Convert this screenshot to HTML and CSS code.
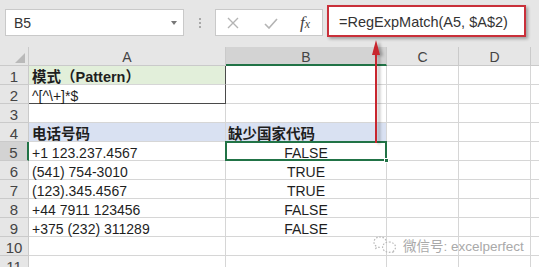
FILE: index.html
```html
<!DOCTYPE html>
<html lang="zh">
<head>
<meta charset="utf-8">
<link rel="stylesheet" href="styles.css">
</head>
<body>
<div class="app">
  <div class="toolbar">
    <div class="namebox"><span>B5</span><span class="caret"></span></div>
    <div class="dots"><i></i><i></i><i></i></div>
    <div class="fxbox">
      <svg class="ic-x" width="12" height="12" viewBox="0 0 12 12"><path d="M1 1L11 11M11 1L1 11" stroke="#b4b4b4" stroke-width="1.4" fill="none"/></svg>
      <svg class="ic-ok" width="14" height="11" viewBox="0 0 14 11"><path d="M1 6L5 10L13 1" stroke="#b4b4b4" stroke-width="1.6" fill="none"/></svg>
      <span class="fx">f<small>x</small></span>
    </div>
    <div class="formula">=RegExpMatch(A5, $A$2)</div>
  </div>

  <div class="sheet">
    <div class="h corner"><span class="tri"></span></div>
    <div class="h col">A</div>
    <div class="h col sel">B</div>
    <div class="h col">C</div>
    <div class="h col">D</div>
    <div class="h col last"></div>

    <div class="h row">1</div>
    <div class="c green boxr bold">模式（Pattern）</div>
    <div class="c"></div><div class="c"></div><div class="c"></div><div class="c last"></div>

    <div class="h row">2</div>
    <div class="c boxr boxb">^[^\+]*$</div>
    <div class="c"></div><div class="c"></div><div class="c"></div><div class="c last"></div>

    <div class="h row">3</div>
    <div class="c"></div>
    <div class="c"></div><div class="c"></div><div class="c"></div><div class="c last"></div>

    <div class="h row">4</div>
    <div class="c blue bold">电话号码</div>
    <div class="c blue bold bcol">缺少国家代码</div><div class="c"></div><div class="c"></div><div class="c last"></div>

    <div class="h row sel">5</div>
    <div class="c">+1 123.237.4567</div>
    <div class="c mid active">FALSE<span class="handle"></span></div><div class="c"></div><div class="c"></div><div class="c last"></div>

    <div class="h row">6</div>
    <div class="c">(541) 754-3010</div>
    <div class="c mid">TRUE</div><div class="c"></div><div class="c"></div><div class="c last"></div>

    <div class="h row">7</div>
    <div class="c">(123).345.4567</div>
    <div class="c mid">TRUE</div><div class="c"></div><div class="c"></div><div class="c last"></div>

    <div class="h row">8</div>
    <div class="c">+44 7911 123456</div>
    <div class="c mid">FALSE</div><div class="c"></div><div class="c"></div><div class="c last"></div>

    <div class="h row">9</div>
    <div class="c">+375 (232) 311289</div>
    <div class="c mid">FALSE</div><div class="c"></div><div class="c"></div><div class="c last"></div>

    <div class="h row">10</div>
    <div class="c"></div>
    <div class="c"></div><div class="c"></div><div class="c"></div><div class="c last"></div>

    <div class="h row">11</div>
    <div class="c"></div>
    <div class="c"></div><div class="c"></div><div class="c"></div><div class="c last"></div>
  </div>

  <svg class="arrow" width="16" height="106" viewBox="0 0 16 106">
    <path d="M6 14V104" stroke="#c8262e" stroke-width="2" fill="none"/>
    <path d="M6 1L2 16H10Z" fill="#c8262e"/>
  </svg>

  <div class="watermark">
    <svg width="24" height="18" viewBox="0 0 24 18">
      <path d="M13 4.5C12 2.2 9.4 1 7 1C3.6 1 1 3.3 1 6.2C1 7.9 1.9 9.3 3.3 10.3L2.8 12.3L5.2 11.1C5.9 11.3 6.6 11.4 7.4 11.4" stroke="#b8b8b8" stroke-width="1.2" stroke-dasharray="1.6 1.6" fill="none"/>
      <path d="M16 6C19.5 6 22.5 8.2 22.5 11.2C22.5 12.7 21.7 14 20.5 14.9L21 16.8L18.8 15.8C17.9 16.1 17 16.3 16 16.3C12.5 16.3 9.6 14 9.6 11.2C9.6 8.2 12.5 6 16 6Z" stroke="#b8b8b8" stroke-width="1.2" stroke-dasharray="1.6 1.6" fill="none"/>
    </svg>
    <span>微信号: excelperfect</span>
  </div>
</div>
</body>
</html>
```

FILE: styles.css
```css
* { box-sizing: border-box; margin: 0; padding: 0; }
html, body { width: 539px; height: 267px; overflow: hidden; background: #fff; }
body {
  font-family: "Liberation Sans", "Noto Sans CJK SC", sans-serif;
  color: #222;
}
.app { position: relative; width: 539px; height: 267px; overflow: hidden; }

/* formula bar */
.toolbar {
  height: 47px;
  background: #e6e6e6;
  display: flex;
  align-items: flex-start;
}
.namebox {
  margin: 9px 0 0 5px;
  width: 179px;
  height: 27px;
  background: #fff;
  border: 1px solid #c9c9c9;
  display: flex;
  align-items: center;
  justify-content: space-between;
  padding: 1px 6px 0 8px;
  font-size: 14px;
  color: #333;
}
.caret {
  width: 0; height: 0;
  border-left: 3.5px solid transparent;
  border-right: 3.5px solid transparent;
  border-top: 4px solid #777;
}
.dots {
  margin: 18px 0 0 15px;
  width: 2px;
  display: flex;
  flex-direction: column;
  gap: 2px;
}
.dots i { display: block; width: 2px; height: 2px; background: #a8a8a8; }
.fxbox {
  margin: 9px 0 0 14px;
  width: 108px;
  height: 27px;
  background: #fff;
  border: 1px solid #c9c9c9;
  display: flex;
  align-items: center;
  padding-left: 11px;
}
.ic-x { margin-top: 1px; }
.ic-ok { margin-left: 25px; margin-top: 2px; }
.fx {
  margin-left: 22px;
  font-family: "Liberation Serif", serif;
  font-style: italic;
  font-size: 17px;
  color: #444;
  line-height: 1;
}
.fx small { font-size: 12px; }
.formula {
  margin: 5px 0 0 4px;
  width: 199px;
  height: 32px;
  background: #fff;
  border: 2px solid #c9303a;
  box-shadow: 2px 2px 3px rgba(0, 0, 0, 0.3);
  padding: 2px 0 0 10px;
  display: flex;
  align-items: center;
  font-size: 14.5px;
  color: #333;
  white-space: nowrap;
}

/* sheet grid */
.sheet {
  display: grid;
  grid-template-columns: 29px 197px 161px 72px 72px 8px;
  grid-auto-rows: 19px;
}
.h {
  background: #e6e6e6;
  border-right: 1px solid #cacaca;
  border-bottom: 1px solid #cacaca;
  color: #444;
  text-align: center;
  font-size: 14px;
  line-height: 18px;
  padding-top: 1px;
}
.h.row { font-size: 15px; padding-top: 2px; }
.h.col.sel { background: #d3d3d3; border-bottom: 2px solid #217346; }
.h.row.sel { background: #d3d3d3; border-right: 2px solid #217346; }
.corner { position: relative; }
.tri {
  position: absolute;
  right: 3px;
  bottom: 2px;
  width: 0; height: 0;
  border-left: 10px solid transparent;
  border-bottom: 10px solid #b9b9b9;
}
.c {
  border-right: 1px solid #d6d6d6;
  border-bottom: 1px solid #d6d6d6;
  font-size: 14px;
  line-height: 18px;
  padding: 2px 3px 0;
  white-space: nowrap;
  color: #1e1e1e;
}
.c.last, .h.last { border-right: none; }
.bold { font-weight: bold; font-size: 14.5px; }
.green { background: #e2efda; }
.blue { background: #d9e1f2; }
.bcol { padding-left: 2px; }
.boxr { border-right-color: #4a4a4a; }
.boxb { border-bottom-color: #4a4a4a; }
.mid { text-align: center; }
.active { position: relative; }
.active::after {
  content: "";
  position: absolute;
  left: -1px; top: -1px; right: -1px; bottom: -1px;
  border: 2px solid #217346;
}
.handle {
  position: absolute;
  right: -3px;
  bottom: -3px;
  width: 5px;
  height: 5px;
  background: #217346;
  border: 1px solid #fff;
  z-index: 2;
}

/* overlays */
.arrow {
  position: absolute;
  left: 370px;
  top: 39px;
  filter: drop-shadow(3px 1px 1.5px rgba(0, 0, 0, 0.3));
}
.watermark {
  position: absolute;
  left: 373px;
  top: 235px;
  display: flex;
  align-items: center;
  gap: 6px;
  font-size: 13.5px;
  color: #a9a9a9;
  text-shadow: 0 0 2px #fff;
}
```
